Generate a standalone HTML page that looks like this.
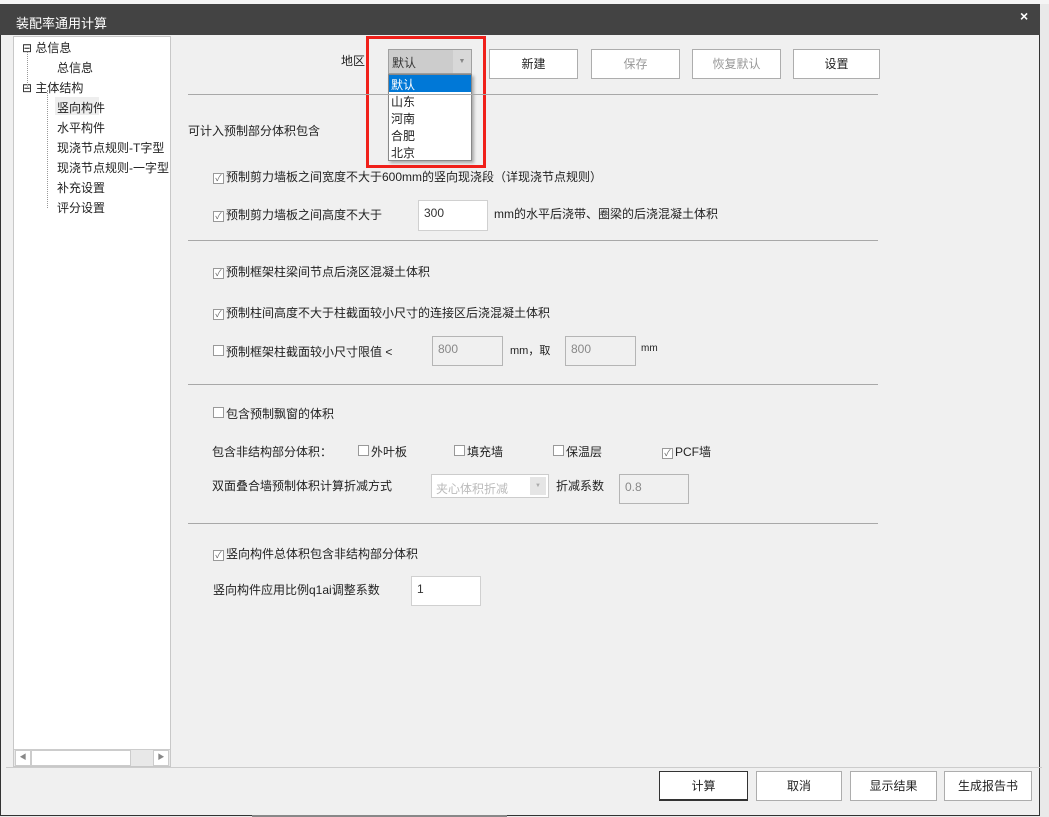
<!DOCTYPE html>
<html><head><meta charset="utf-8"><style>
*{margin:0;padding:0;box-sizing:border-box}
body{width:1049px;height:817px;background:#e9e9e9;position:relative;overflow:hidden;font-family:"Liberation Sans","Microsoft YaHei","Noto Sans CJK SC",sans-serif;font-size:12px;color:#222}
.a{position:absolute;white-space:nowrap}
.btn{position:absolute;background:#fff;border:1px solid #adadad;text-align:center;font-size:12px;line-height:28px;height:30px}
.cb{display:inline-block;width:11px;height:11px;border:1px solid #999;background:#fff;vertical-align:0px;margin-right:2px;position:relative;font-size:9px;line-height:9px;color:#666;text-align:center}
.in{position:absolute;background:#fff;border:1px solid #d0d0d0;height:31px;padding:5px 5px;font-size:12px;color:#333}
.dis{background:#f0f0f0;border-color:#b5b5b5;color:#888}
.hr{position:absolute;height:1px;background:#a8a8a8}
.t{position:absolute;font-size:12px;white-space:nowrap}
</style></head><body>
<div class="a" style="left:0;top:0;width:1049px;height:4px;background:#f5f5f5"></div>
<div class="a" style="left:0;top:4px;width:1040px;height:812px;background:#f0f0f0;border:1px solid #333;border-top:none"></div>
<div class="a" style="left:0;top:4px;width:1040px;height:31px;background:#434343;color:#fff;font-size:13px;padding:9px 0 0 16px">装配率通用计算</div>
<div class="a" style="left:1020px;top:8px;color:#fff;font-size:14px;font-weight:bold">×</div>
<div class="a" style="left:13px;top:36px;width:158px;height:731px;background:#fff;border:1px solid #c8c8c8"></div>
<div class="t" style="left:22px;top:39px">⊟ 总信息</div>
<div class="t" style="left:57px;top:59px">总信息</div>
<div class="t" style="left:22px;top:79px">⊟ 主体结构</div>
<div class="a" style="left:55px;top:97px;width:44px;height:18px;background:#eee"></div>
<div class="t" style="left:57px;top:99px">竖向构件</div>
<div class="t" style="left:57px;top:119px">水平构件</div>
<div class="t" style="left:57px;top:139px">现浇节点规则-T字型</div>
<div class="t" style="left:57px;top:159px">现浇节点规则-一字型</div>
<div class="t" style="left:57px;top:179px">补充设置</div>
<div class="t" style="left:57px;top:199px">评分设置</div>
<div class="a" style="left:27px;top:52px;width:0;height:35px;border-left:1px dotted #999"></div>
<div class="a" style="left:47px;top:90px;width:0;height:118px;border-left:1px dotted #999"></div>
<div class="a" style="left:14px;top:749px;width:156px;height:17px;background:#e8e8e8;border-top:1px solid #ccc"></div>
<div class="a" style="left:15px;top:750px;width:16px;height:16px;background:#fff;border:1px solid #ccc;font-size:7px;text-align:center;line-height:14px;color:#888">◀</div>
<div class="a" style="left:31px;top:750px;width:100px;height:16px;background:#fff;border:1px solid #ccc"></div>
<div class="a" style="left:153px;top:750px;width:16px;height:16px;background:#fff;border:1px solid #ccc;font-size:7px;text-align:center;line-height:14px;color:#888">▶</div>
<div class="hr" style="left:6px;top:767px;width:1036px;background:#ccc"></div>
<div class="t" style="left:341px;top:52px">地区:</div>
<div class="a" style="left:388px;top:49px;width:84px;height:25px;background:#ccc;border:1px solid #a0a0a0;padding:4px 3px;color:#333">默认<span style="position:absolute;right:0;top:0;width:18px;height:23px;background:#d8d8d8;font-size:7px;text-align:center;line-height:23px;color:#888">▼</span></div>
<div class="a" style="left:388px;top:74px;width:84px;height:87px;background:#fff;border:1px solid #888;box-shadow:2px 2px 3px rgba(0,0,0,.3)"></div>
<div class="a" style="left:389px;top:75px;width:82px;height:17px;background:#0078d7"></div>
<div class="t" style="left:391px;top:76px;color:#fff">默认</div>
<div class="t" style="left:391px;top:93px">山东</div>
<div class="t" style="left:391px;top:110px">河南</div>
<div class="t" style="left:391px;top:127px">合肥</div>
<div class="t" style="left:391px;top:144px">北京</div>
<div class="a" style="left:366px;top:36px;width:120px;height:132px;border:3px solid #f0201a"></div>
<div class="btn" style="left:489px;top:49px;width:89px">新建</div>
<div class="btn" style="left:591px;top:49px;width:89px;color:#999">保存</div>
<div class="btn" style="left:692px;top:49px;width:89px;color:#999">恢复默认</div>
<div class="btn" style="left:793px;top:49px;width:87px">设置</div>
<div class="hr" style="left:188px;top:94px;width:690px"></div>
<div class="t" style="left:188px;top:122px">可计入预制部分体积包含</div>
<div class="t" style="left:213px;top:168px"><span class="cb">✓</span>预制剪力墙板之间宽度不大于600mm的竖向现浇段（详现浇节点规则）</div>
<div class="t" style="left:213px;top:206px"><span class="cb">✓</span>预制剪力墙板之间高度不大于</div>
<div class="in" style="left:418px;top:200px;width:70px">300</div>
<div class="t" style="left:494px;top:205px">mm的水平后浇带、圈梁的后浇混凝土体积</div>
<div class="hr" style="left:188px;top:240px;width:690px"></div>
<div class="t" style="left:213px;top:263px"><span class="cb">✓</span>预制框架柱梁间节点后浇区混凝土体积</div>
<div class="t" style="left:213px;top:304px"><span class="cb">✓</span>预制柱间高度不大于柱截面较小尺寸的连接区后浇混凝土体积</div>
<div class="t" style="left:213px;top:343px"><span class="cb"></span>预制框架柱截面较小尺寸限值 &lt;</div>
<div class="in dis" style="left:432px;top:336px;width:71px;height:30px">800</div>
<div class="t" style="left:510px;top:342px;font-size:11px">mm，取</div>
<div class="in dis" style="left:565px;top:336px;width:71px;height:30px">800</div>
<div class="t" style="left:641px;top:343px;font-size:10px">mm</div>
<div class="hr" style="left:188px;top:384px;width:690px"></div>
<div class="t" style="left:213px;top:405px"><span class="cb"></span>包含预制飘窗的体积</div>
<div class="t" style="left:212px;top:443px">包含非结构部分体积：</div>
<div class="t" style="left:358px;top:443px"><span class="cb"></span>外叶板</div>
<div class="t" style="left:454px;top:443px"><span class="cb"></span>填充墙</div>
<div class="t" style="left:553px;top:443px"><span class="cb"></span>保温层</div>
<div class="t" style="left:662px;top:443px"><span class="cb">✓</span>PCF墙</div>
<div class="t" style="left:212px;top:477px">双面叠合墙预制体积计算折减方式</div>
<div class="a" style="left:431px;top:474px;width:118px;height:24px;background:#fff;border:1px solid #ccc;color:#bbb;padding:5px 4px">夹心体积折减<span style="position:absolute;right:2px;top:2px;width:16px;height:18px;background:#e5e5e5;font-size:6px;text-align:center;line-height:18px;color:#aaa">▼</span></div>
<div class="t" style="left:556px;top:477px">折减系数</div>
<div class="in dis" style="left:619px;top:474px;width:70px;height:30px">0.8</div>
<div class="hr" style="left:188px;top:523px;width:690px"></div>
<div class="t" style="left:213px;top:545px"><span class="cb">✓</span>竖向构件总体积包含非结构部分体积</div>
<div class="t" style="left:213px;top:581px">竖向构件应用比例q1ai调整系数</div>
<div class="in" style="left:411px;top:576px;width:70px;height:30px">1</div>
<div class="btn" style="left:659px;top:771px;width:89px;border-color:#333;border-bottom-width:2px">计算</div>
<div class="btn" style="left:756px;top:771px;width:86px">取消</div>
<div class="btn" style="left:850px;top:771px;width:87px">显示结果</div>
<div class="btn" style="left:944px;top:771px;width:88px">生成报告书</div>
<div class="a" style="left:252px;top:815px;width:255px;height:2px;background:#888"></div>
</body></html>
